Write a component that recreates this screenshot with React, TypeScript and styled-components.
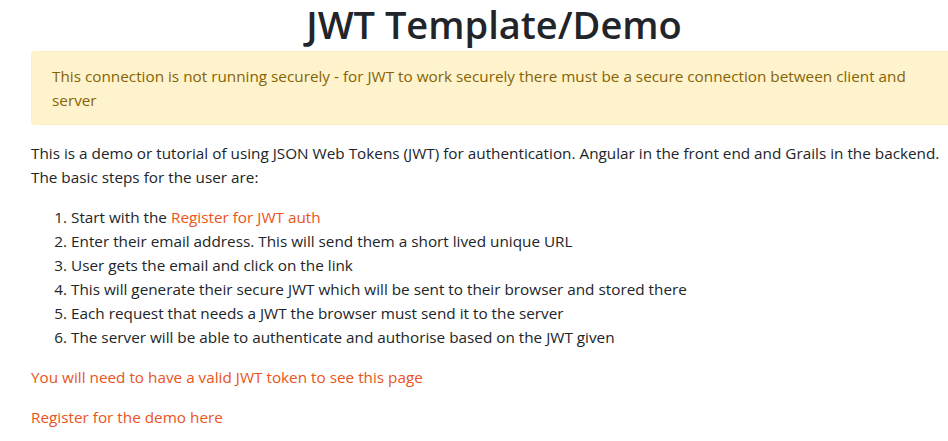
import React from 'react';
import styled, { createGlobalStyle } from 'styled-components';

const GlobalStyle = createGlobalStyle`
    html, body {
        margin: 0;
        padding: 0;
        background: #fff;
        overflow-x: hidden;
    }
    body {
        font-family: "Open Sans", "Noto Sans", sans-serif;
        font-size: 15.3px;
        line-height: 24px;
        color: #212529;
    }
`;

/**
 * Page wrapper, a bit wider than the window like the original
 */
const Container = styled.div`
    margin-left: 31px;
    width: 926px;
`;

const Title = styled.h1`
    margin: 0 0 3px;
    font-size: 38px;
    line-height: 48px;
    font-weight: 600;
    text-align: center;
    color: #212529;
`;

const Alert = styled.div`
    background-color: #fff3cd;
    border: 1px solid #ffeeba;
    border-radius: 4px;
    color: #856404;
    padding: 12px 20px;
    margin-bottom: 16px;
`;

const Paragraph = styled.p`
    margin: 0 0 16px;
`;

const Steps = styled.ol`
    margin: 0 0 16px;
    padding-left: 40px;
`;

const Link = styled.a`
    color: #e95420;
    text-decoration: none;
    cursor: pointer;
`;

const steps: React.ReactNode[] = [
    <>Start with the <Link href="#">Register for JWT auth</Link></>,
    'Enter their email address. This will send them a short lived unique URL',
    'User gets the email and click on the link',
    'This will generate their secure JWT which will be sent to their browser and stored there',
    'Each request that needs a JWT the browser must send it to the server',
    'The server will be able to authenticate and authorise based on the JWT given',
];

export default function App() {
    return <>
        <GlobalStyle />
        <Container>
            <Title>JWT Template/Demo</Title>

            <Alert>
                This connection is not running securely - for JWT to work securely there must be a secure connection between client and server
            </Alert>

            <Paragraph>
                This is a demo or tutorial of using JSON Web Tokens (JWT) for authentication. Angular in the front end and Grails in the backend. The basic steps for the user are:
            </Paragraph>

            <Steps>
                {steps.map((s, i) => <li key={i}>{s}</li>)}
            </Steps>

            <Paragraph>
                <Link href="#">You will need to have a valid JWT token to see this page</Link>
            </Paragraph>

            <Paragraph>
                <Link href="#">Register for the demo here</Link>
            </Paragraph>
        </Container>
    </>;
}
